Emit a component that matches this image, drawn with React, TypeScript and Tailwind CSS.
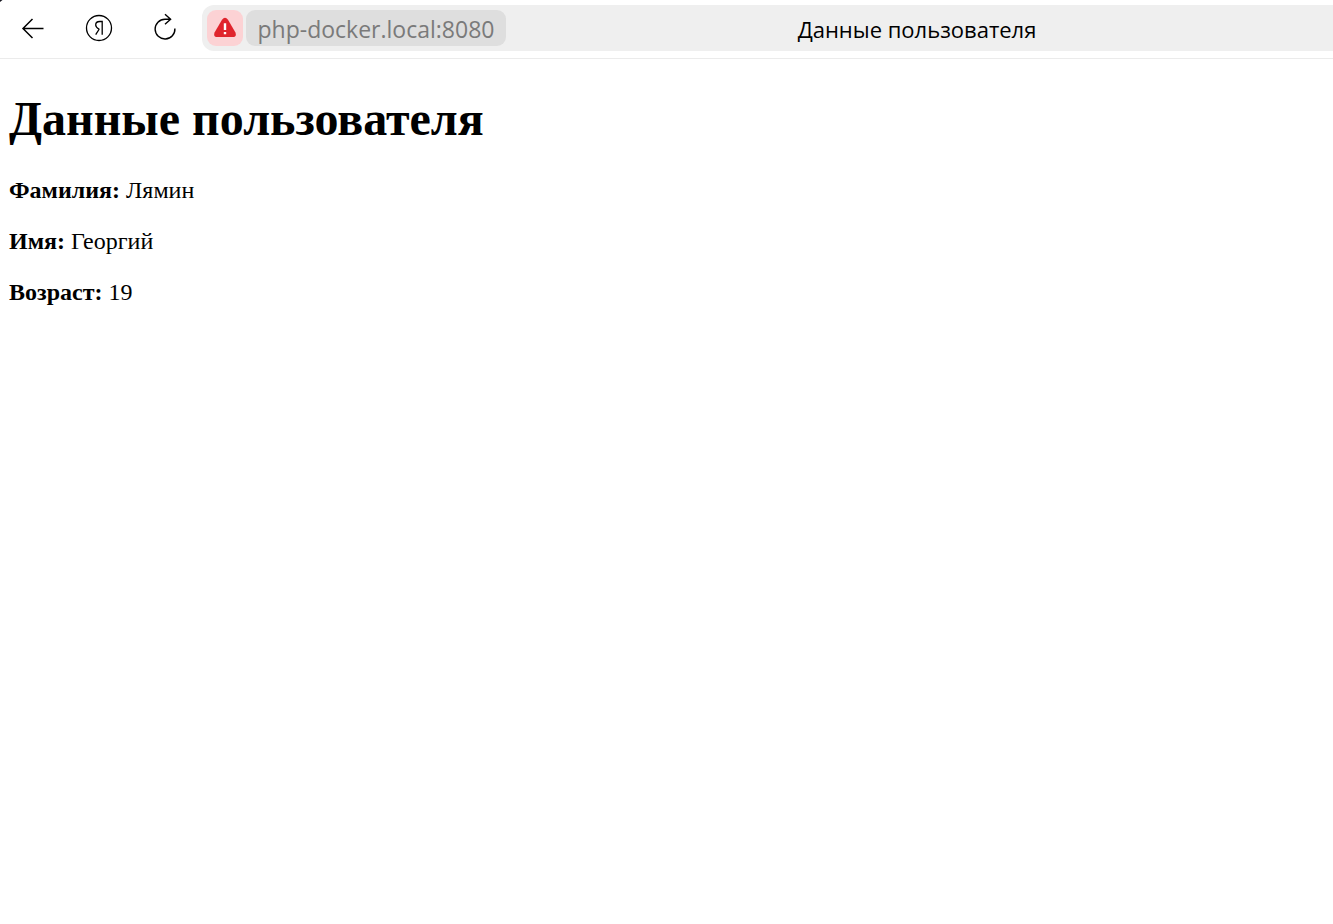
import type { ReactNode } from 'react';

function NavButton({ label, children }: { label: string; children: ReactNode }) {
  return (
    <button type="button" aria-label={label} className="flex h-12 w-[66px] items-center justify-center text-black">
      {children}
    </button>
  );
}

function Toolbar() {
  return (
    <header className="flex items-center border-b border-[#ebebeb] pt-[5px] pb-[7px] font-['Open_Sans','Noto_Sans',sans-serif] text-[23px] leading-[34px]">
      <nav className="-my-1 flex w-[202px] shrink-0">
        <NavButton label="Назад">
          <svg width="30" height="30" viewBox="0 0 30 30" fill="none" stroke="currentColor" strokeWidth="1.5">
            <path d="M25.500 15.500H5.500M14.500 6L5 15.500L14.500 25" />
          </svg>
        </NavButton>
        <NavButton label="Яндекс">
          <svg width="30" height="30" viewBox="0 0 30 30" fill="none" stroke="currentColor" strokeWidth="1.3">
            <circle cx="15" cy="15" r="12.5" />
            <path d="M18.200 21.700V8.500H15.700C13 8.500 11.700 9.700 11.700 11.900C11.700 13.900 12.800 14.900 15.300 16.300M15.300 16L11.700 21.700" />
          </svg>
        </NavButton>
        <NavButton label="Обновить">
          <svg width="30" height="30" viewBox="0 0 30 30" fill="none" stroke="currentColor" strokeWidth="1.4">
            <path d="M24.900 15.500A9.900 9.900 0 1 1 15 6.200H21M15 1.200L20.600 6.200L15 11.300" />
          </svg>
        </NavButton>
      </nav>
      <div className="flex min-w-0 flex-1 items-center rounded-l-xl bg-[#efefef] p-[5px]">
        <button type="button" aria-label="Подключение не защищено" className="mr-[3px] flex size-9 shrink-0 items-center justify-center rounded-[9px] bg-[#fcd2d4]">
          <svg width="24" height="24" viewBox="0 0 24 24">
            <path d="M9 3.800Q12 -.4 15 3.800L22.300 16.200Q24.200 21.100 19.600 21.100H4.400Q-.2 21.100 1.700 16.200Z" fill="#e0242c" />
            <path d="M12 7.300V14M12 16V18.300" stroke="#fff" strokeWidth="2.400" />
          </svg>
        </button>
        <button type="button" className="h-9 w-[260px] shrink-0 rounded-[9px] bg-[#dedede] pt-0.5 text-center text-[#7a7a7a]">
          php-docker.local:8080
        </button>
        <span className="min-w-0 flex-1 truncate pt-0.5 text-center text-[22px] text-black">Данные пользователя</span>
      </div>
    </header>
  );
}

const fields = [
  { label: 'Фамилия', value: 'Лямин' },
  { label: 'Имя', value: 'Георгий' },
  { label: 'Возраст', value: '19' },
];

export default function App() {
  return (
    <div className="min-h-screen bg-white text-black">
      <svg className="absolute left-0 top-0" width="3" height="2" viewBox="0 0 3 2" aria-hidden="true">
        <path d="M0 0H2.500L0 2Z" fill="#16161f" />
      </svg>
      <Toolbar />
      <main className="px-[9px] pt-8 font-['Liberation_Serif',serif] text-2xl leading-[27px]">
        <h1 className="mb-[30px] text-5xl leading-14 font-bold">Данные пользователя</h1>
        {fields.map((field) => (
          <p key={field.label} className="mb-6">
            <b>{field.label}:</b> {field.value}
          </p>
        ))}
      </main>
    </div>
  );
}
